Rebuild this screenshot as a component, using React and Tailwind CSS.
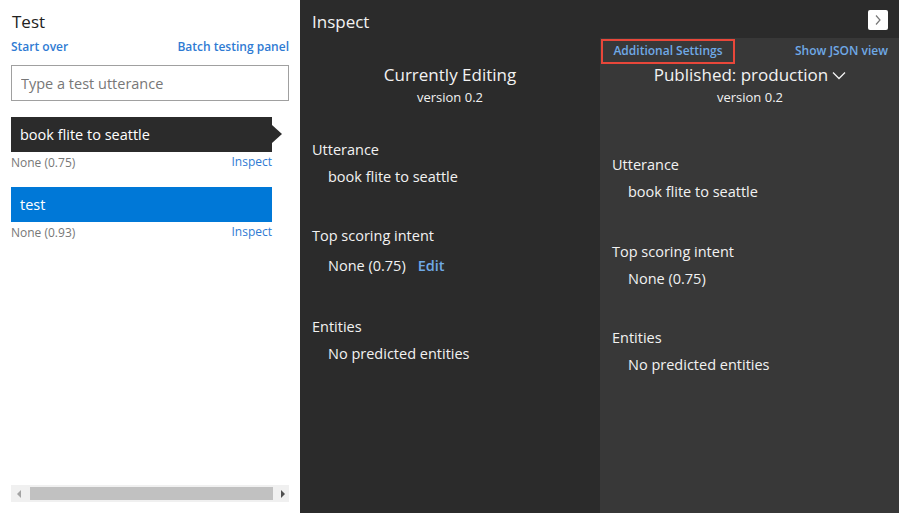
import { useState } from "react";

const font = { fontFamily: '"Open Sans", "Noto Sans", sans-serif' };

function TestItem({ text, score, active, selected }) {
  return (
    <div className="mb-[15px]">
      <div
        className={`relative h-[35px] flex items-center px-[9px] text-[14.5px] text-white ${
          active ? "bg-[#0078d7]" : "bg-[#2b2b2b]"
        }`}
      >
        {text}
        {selected && (
          <span className="absolute right-[-10px] top-[8px] w-0 h-0 border-y-[9px] border-y-transparent border-l-[10px] border-l-[#2b2b2b]" />
        )}
      </div>
      <div className="flex justify-between items-center h-[20px] text-[12px]">
        <span className="text-[#777] pt-[1px]">{score}</span>
        <a className="text-[#2f7bd3] cursor-pointer">Inspect</a>
      </div>
    </div>
  );
}

function Section({ label, children, className }) {
  return (
    <div className={className}>
      <div className="text-[14.5px] leading-[20px] text-[#f2f2f2]">{label}</div>
      <div className="pl-[16px] mt-[7px] text-[14.5px] leading-[20px] text-[#f2f2f2]">{children}</div>
    </div>
  );
}

function App() {
  const [value, setValue] = useState("");

  return (
    <div className="flex w-[899px] h-[513px] overflow-hidden" style={font}>
      {/* test panel */}
      <div className="w-[300px] h-full bg-white flex flex-col px-[11px]">
        <div className="text-[17px] leading-[22px] text-[#222] mt-[11px] pl-[1px]">Test</div>
        <div className="flex justify-between text-[12px] font-semibold text-[#2f7bd3] mt-[6px] leading-[16px]">
          <a className="cursor-pointer">Start over</a>
          <a className="cursor-pointer">Batch testing panel</a>
        </div>
        <input
          value={value}
          onChange={(e) => setValue(e.target.value)}
          placeholder="Type a test utterance"
          className="mt-[10px] h-[36px] w-full border border-[#a0a0a0] px-[9px] text-[14.5px] text-[#333] placeholder:text-[#777] outline-none"
        />
        <div className="mt-[16px] pr-[17px]">
          <TestItem text="book flite to seattle" score="None (0.75)" selected />
          <TestItem text="test" score="None (0.93)" active />
        </div>
        <div className="mt-auto mb-[11px] h-[17px] bg-[#f0f0f0] flex items-center px-[2px]">
          <span className="w-0 h-0 border-y-[4px] border-y-transparent border-r-[4px] border-r-[#a3a3a3] ml-[4px]" />
          <div className="h-[13px] bg-[#c1c1c1] ml-[9px] w-[243px]" />
          <span className="w-0 h-0 border-y-[4px] border-y-transparent border-l-[4px] border-l-[#505050] ml-[8px]" />
        </div>
      </div>

      {/* inspect panel */}
      <div className="flex-1 h-full bg-[#2b2b2b] flex flex-col">
        <div className="h-[38px] flex items-start justify-between pl-[12px] pr-[11px] shrink-0">
          <span className="text-[17px] leading-[22px] text-[#f2f2f2] mt-[11px]">Inspect</span>
          <button className="w-[20px] h-[20px] bg-white rounded-[2px] flex items-center justify-center mt-[10px]">
            <svg width="8" height="12" viewBox="0 0 8 12">
              <path d="M2 1.5 L6 6 L2 10.5" fill="none" stroke="#777" strokeWidth="1.2" />
            </svg>
          </button>
        </div>
        <div className="flex flex-1">
          {/* current */}
          <div className="w-[300px] pl-[12px]">
            <div className="h-[25px]" />
            <div className="text-center pr-[12px]">
              <div className="text-[17px] leading-[24px] text-[#f2f2f2]">Currently Editing</div>
              <div className="text-[13px] leading-[18px] text-[#f2f2f2] mt-[1px]">version 0.2</div>
            </div>
            <Section label="Utterance" className="mt-[34px]">book flite to seattle</Section>
            <Section label="Top scoring intent" className="mt-[39px]">
              <span className="inline-block mt-[3px]">
                None (0.75)
                <a className="ml-[12px] font-semibold text-[#6fa9e6] cursor-pointer">Edit</a>
              </span>
            </Section>
            <Section label="Entities" className="mt-[41px]">No predicted entities</Section>
          </div>
          {/* published */}
          <div className="flex-1 bg-[#383838] pl-[12px] pr-[11px]">
            <div className="h-[25px] flex items-center justify-between">
              <a className="-ml-[11px] mt-[1px] h-[25px] w-[134px] flex items-center justify-center whitespace-nowrap border-2 border-[#e8473a] text-[12px] font-semibold text-[#6fa9e6] cursor-pointer">
                Additional Settings
              </a>
              <a className="text-[12px] font-semibold text-[#6fa9e6] cursor-pointer whitespace-nowrap">Show JSON view</a>
            </div>
            <div className="text-center">
              <div className="text-[17px] leading-[24px] text-[#f2f2f2] flex items-center justify-center gap-[4px]">
                Published: production
                <svg width="14" height="9" viewBox="0 0 14 9">
                  <path d="M1 1.5 L7 7.5 L13 1.5" fill="none" stroke="#f2f2f2" strokeWidth="1.3" />
                </svg>
              </div>
              <div className="text-[13px] leading-[18px] text-[#f2f2f2] mt-[1px]">version 0.2</div>
            </div>
            <Section label="Utterance" className="mt-[49px]">book flite to seattle</Section>
            <Section label="Top scoring intent" className="mt-[40px]">None (0.75)</Section>
            <Section label="Entities" className="mt-[39px]">No predicted entities</Section>
          </div>
        </div>
      </div>
    </div>
  );
}

export default App;
